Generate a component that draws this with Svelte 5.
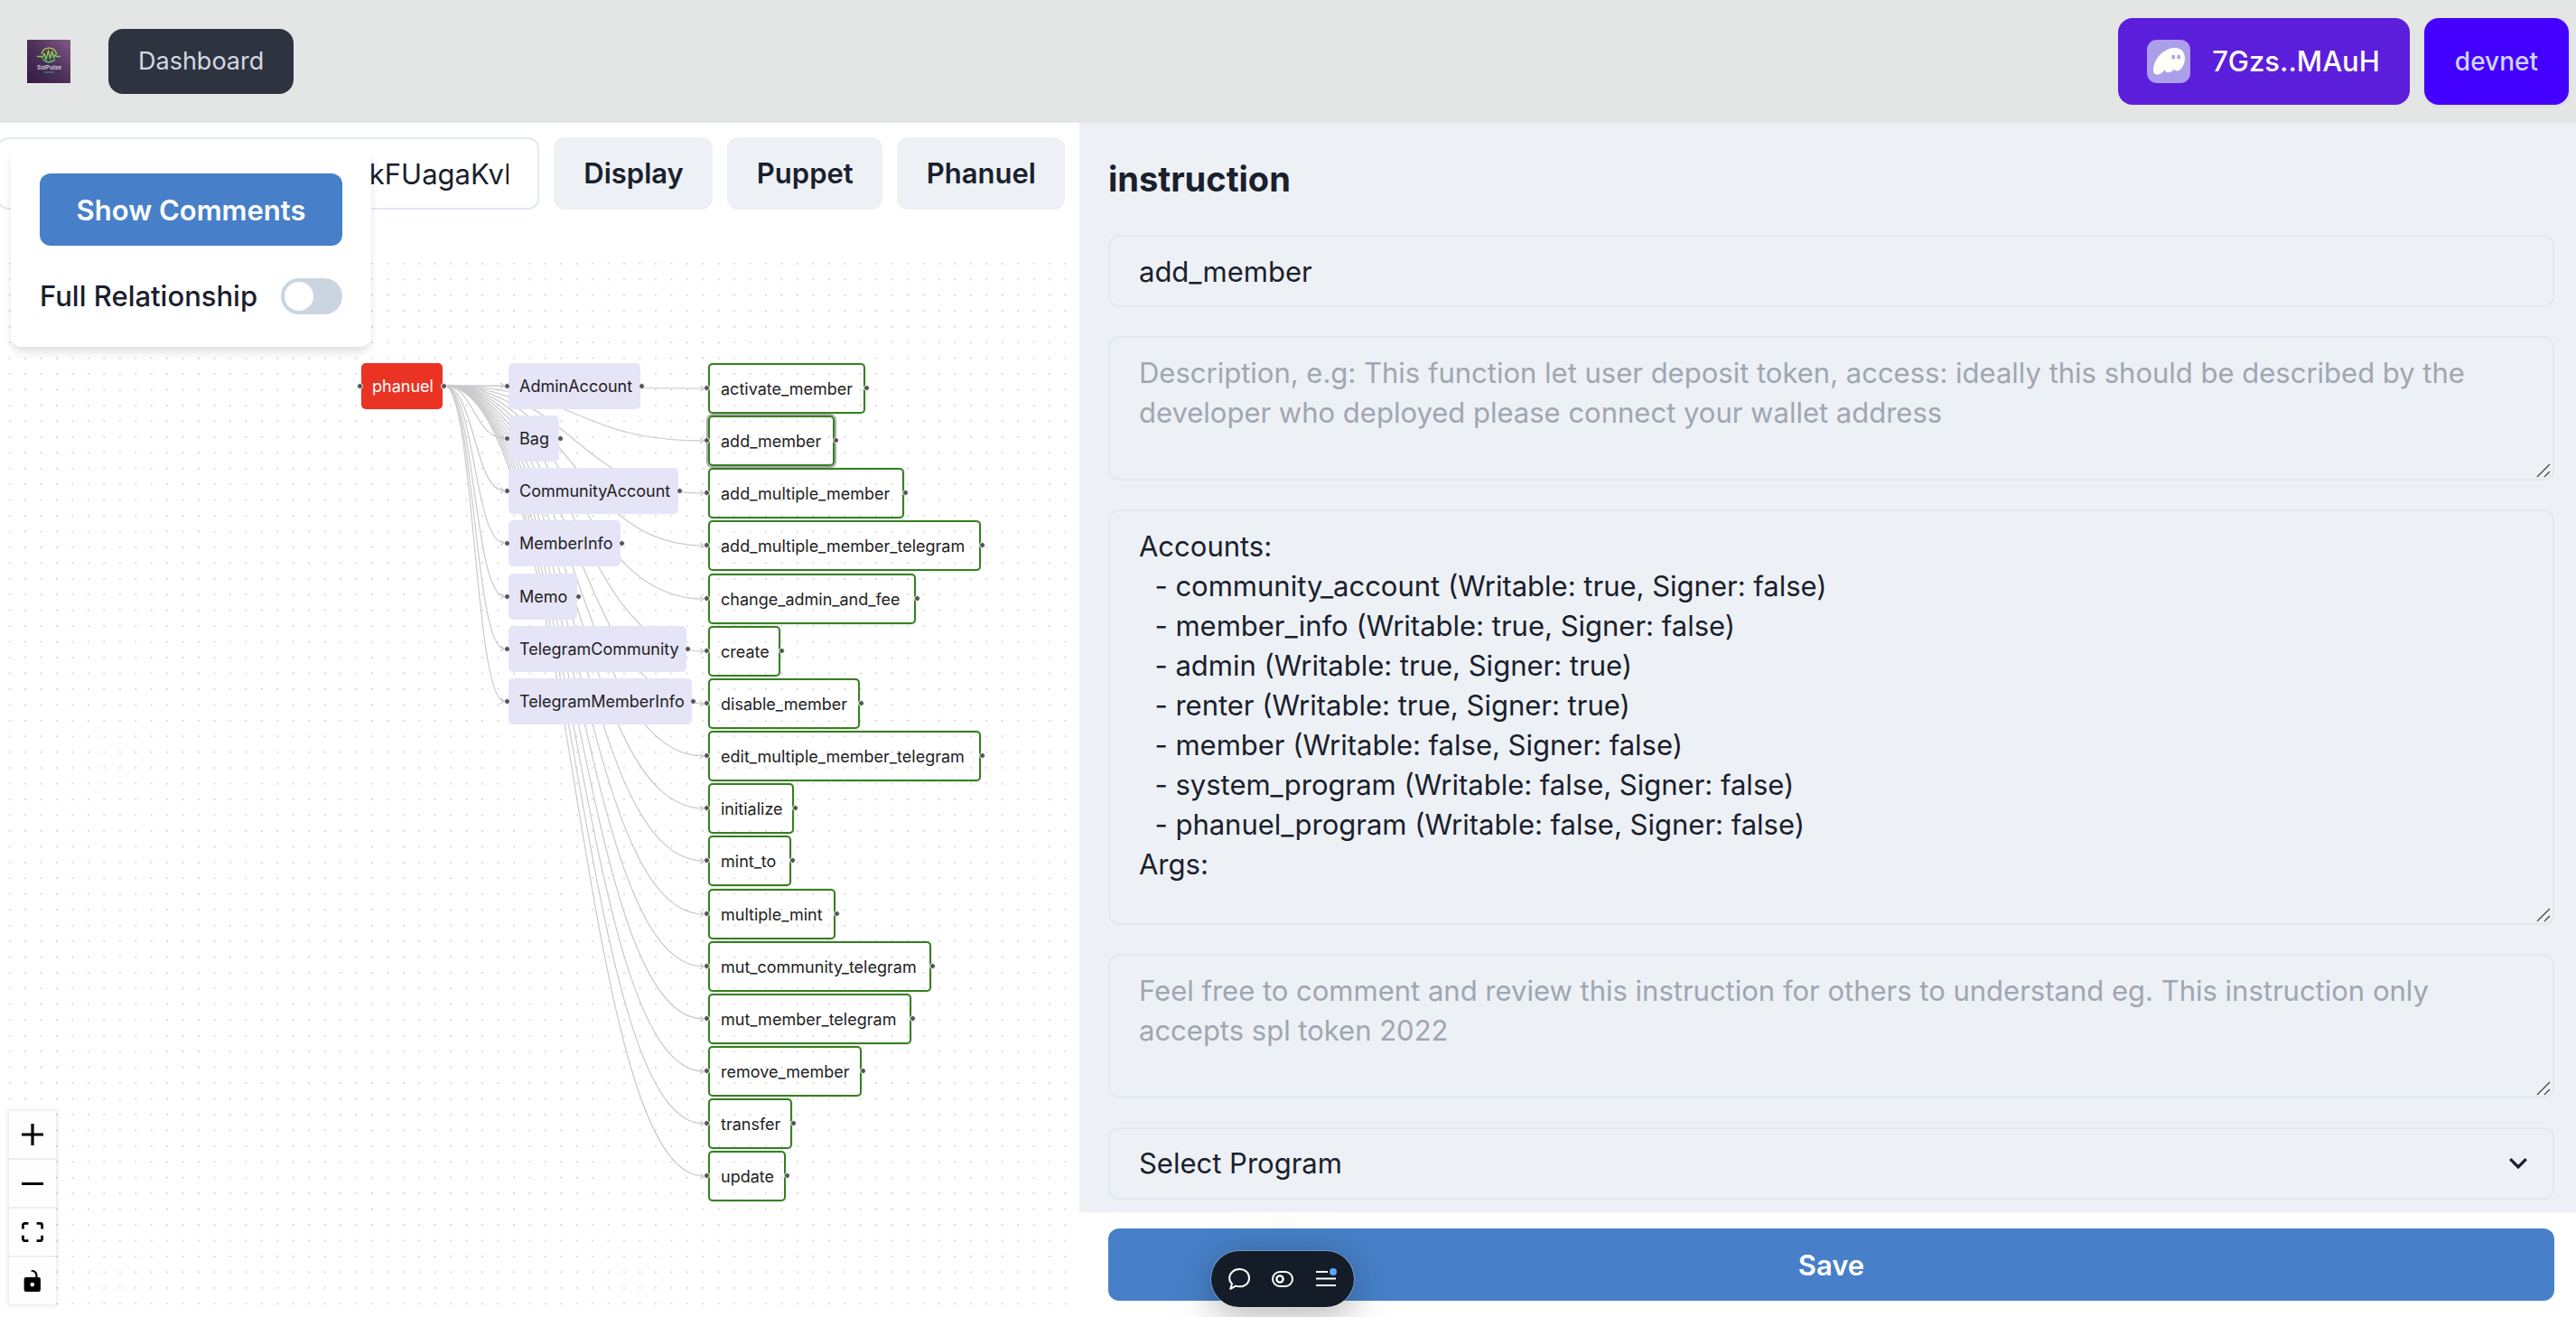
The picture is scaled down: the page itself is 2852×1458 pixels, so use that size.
<script>
  // Screen pixels per graph unit at the current zoom level.
  const SCALE = 1.163;
  const ROW_STEP = 50 * SCALE;
  const GRID = 15 * SCALE;
  const FIRST_ROW = 122;

  const rowTop = (index) => FIRST_ROW + Math.round(index * ROW_STEP);

  const accounts = [
    ['AdminAccount', 146],
    ['Bag', 56],
    ['CommunityAccount', 188],
    ['MemberInfo', 124],
    ['Memo', 76],
    ['TelegramCommunity', 197],
    ['TelegramMemberInfo', 203],
  ];

  const instructions = [
    ['activate_member', 174],
    ['add_member', 140],
    ['add_multiple_member', 217],
    ['add_multiple_member_telegram', 302],
    ['change_admin_and_fee', 230],
    ['create', 80],
    ['disable_member', 168],
    ['edit_multiple_member_telegram', 302],
    ['initialize', 95],
    ['mint_to', 92],
    ['multiple_mint', 141],
    ['mut_community_telegram', 247],
    ['mut_member_telegram', 225],
    ['remove_member', 170],
    ['transfer', 93],
    ['update', 86],
  ];

  const root = { name: 'phanuel', kind: 'program', x: 400, y: rowTop(0), w: 90 };
  const nodes = [
    root,
    ...accounts.map(([name, w], i) => ({ name, kind: 'account', x: 563, y: rowTop(i), w })),
    ...instructions.map(([name, w], i) => ({ name, kind: 'instruction', x: 784, y: rowTop(i), w })),
  ];

  const sourceX = 492;
  const sourceY = root.y + 25;

  const edges = nodes.slice(1).map((node) => {
    const tx = node.x - 5;
    const ty = node.y + (node.kind === 'instruction' ? 28 : 25);
    const mid = (sourceX + tx) / 2;
    return {
      curve: `M${sourceX} ${sourceY} C${mid} ${sourceY} ${mid} ${ty} ${tx} ${ty}`,
      arrow: `M${tx - 4} ${ty - 3} L${tx} ${ty} L${tx - 4} ${ty + 3}`,
    };
  });

  let selected = $state('add_member');
  let programId = $state('PhnGkv7Qm2WcR9sTdX4kFUagaKvkN3eHyTz');
  let fullRelationship = $state(false);
  let instructionName = $state('add_member');
  let description = $state('');
  let comment = $state('');
  let details = $state(
    [
      'Accounts:',
      '  - community_account (Writable: true, Signer: false)',
      '  - member_info (Writable: true, Signer: false)',
      '  - admin (Writable: true, Signer: true)',
      '  - renter (Writable: true, Signer: true)',
      '  - member (Writable: false, Signer: false)',
      '  - system_program (Writable: false, Signer: false)',
      '  - phanuel_program (Writable: false, Signer: false)',
      'Args:',
    ].join('\n')
  );
</script>

{#snippet grip()}
  <svg class="grip" viewBox="0 0 16 16" aria-hidden="true">
    <path d="M2 15.5 15.5 2M10 15.5 15.5 10" stroke="#fff" stroke-width="2" />
    <path d="M1 15 15 1M9 15 15 9" stroke="#55585e" stroke-width="1.6" />
  </svg>
{/snippet}

<div class="page">
  <header>
    <svg class="logo" viewBox="0 0 48 48" role="img" aria-label="SolPulse">
      <defs>
        <linearGradient id="logo-bg" x1="0" y1="1" x2="1" y2="0">
          <stop offset="0" stop-color="#321b45" />
          <stop offset="0.5" stop-color="#4d3059" />
          <stop offset="1" stop-color="#82598a" />
        </linearGradient>
        <linearGradient id="logo-mark" x1="0" y1="8" x2="0" y2="26" gradientUnits="userSpaceOnUse">
          <stop offset="0" stop-color="#c3d63c" />
          <stop offset="1" stop-color="#43cf62" />
        </linearGradient>
      </defs>
      <rect width="48" height="48" fill="url(#logo-bg)" />
      <g fill="none" stroke="url(#logo-mark)" stroke-linecap="round" stroke-linejoin="round">
        <path d="M16 15.500a8.600 8.600 0 0 1 16.600 0M18 22a8.600 8.600 0 0 0 12.500 0" stroke-width="1.400" />
        <path d="M11.500 18.500h4l1.500 1.500 2-5 2 7 2.500-10 2 9 2.200-8 2 7 1.500-3.500 1.300 2h4" stroke-width="1.300" />
      </g>
      <text x="24.500" y="32.500" text-anchor="middle" font-size="6.500" font-weight="600" fill="#d8cfe0">SolPulse</text>
      <path d="M19 36h11" stroke="#3c8f86" stroke-width="1.400" stroke-dasharray="2 0.600" />
    </svg>
    <a class="nav-link" href="#dashboard">Dashboard</a>
    <div class="wallet">
      <button class="address" type="button">
        <svg viewBox="0 0 48 48" aria-hidden="true">
          <rect width="48" height="48" rx="11" fill="#ab9fec" />
          <path d="M7 34C7 22 18 9 31 9c7.500 0 11 5 11 11.500C42 28 37.500 34.500 33.500 34.500c-2 0-3-.700-3.200-2.200-2 2.500-4.500 4-6.800 4-2.200 0-3.500-1.300-3.400-3.300C17.500 36.500 14.500 38.500 11.500 38.500 8.500 38.500 7 36.800 7 34z" fill="#fffdf8" />
          <ellipse cx="29.200" cy="19" rx="1.900" ry="2.500" fill="#ab9fec" />
          <ellipse cx="35.200" cy="19" rx="1.900" ry="2.500" fill="#ab9fec" />
        </svg>
        7Gzs..MAuH
      </button>
      <button class="network" type="button">devnet</button>
    </div>
  </header>

  <main>
    <section class="explorer" aria-label="Program graph">
      <div class="toolbar">
        <input type="text" aria-label="Program address" bind:value={programId} />
        <button type="button">Display</button>
        <button type="button">Puppet</button>
        <button type="button">Phanuel</button>
      </div>

      <div class="canvas">
        <svg class="edges" width="100%" height="100%" aria-hidden="true">
          <defs>
            <pattern id="grid" x="2" y="3.200" width={GRID} height={GRID} patternUnits="userSpaceOnUse">
              <circle cx="8.700" cy="8.700" r="0.600" fill="#81818a" />
            </pattern>
          </defs>
          <rect width="100%" height="100%" fill="url(#grid)" />
          {#each edges as edge}
            <path d={edge.curve} />
            <path d={edge.arrow} />
          {/each}
        </svg>

        {#each nodes as node}
          <button
            type="button"
            class="node {node.kind}"
            class:selected={selected === node.name}
            style="left: {node.x}px; top: {node.y}px; width: {node.w}px"
            onclick={() => (selected = node.name)}
          >{node.name}</button>
        {/each}

        <div class="controls">
          <button type="button" aria-label="Zoom in">
            <svg viewBox="0 0 32 32"><path d="M32 18.133H18.133V32h-4.266V18.133H0v-4.266h13.867V0h4.266v13.867H32z" /></svg>
          </button>
          <button type="button" aria-label="Zoom out">
            <svg viewBox="0 0 32 4"><path d="M0 0h32v4H0z" /></svg>
          </button>
          <button type="button" aria-label="Fit view">
            <svg viewBox="0 0 32 30"><path d="M3.692 4.630c0-.530.400-.938.939-.938h5.215V0H4.708C2.130 0 0 2.054 0 4.630v5.216h3.692V4.631zM27.354 0h-5.200v3.692h5.170c.530 0 .984.400.984.939v5.215H32V4.631A4.624 4.624 0 0 0 27.354 0zm.954 24.830c0 .532-.400.940-.939.940h-5.215v3.768h5.215c2.577 0 4.631-2.130 4.631-4.707v-5.139h-3.692v5.139zm-23.677.940a.919.919 0 0 1-.939-.940v-5.138H0v5.139c0 2.577 2.130 4.707 4.708 4.707h5.138V25.770H4.631z" /></svg>
          </button>
          <button type="button" aria-label="Toggle interactivity">
            <svg viewBox="0 0 25 32"><path d="M21.333 10.667H19.810V7.619C19.810 3.429 16.380 0 12.190 0c-4.114 1.828-1.370 2.133.305 2.438 1.676.305 4.420 2.590 4.420 5.181v3.048H3.047A3.056 3.056 0 0 0 0 13.714v15.238A3.056 3.056 0 0 0 3.048 32h18.285a3.056 3.056 0 0 0 3.048-3.048V13.714a3.056 3.056 0 0 0-3.048-3.047zM12.190 24.533a3.056 3.056 0 0 1-3.047-3.047 3.056 3.056 0 0 1 3.047-3.048 3.056 3.056 0 0 1 3.048 3.048 3.056 3.056 0 0 1-3.048 3.047z" /></svg>
          </button>
        </div>
      </div>

      <div class="options">
        <button type="button" class="primary">Show Comments</button>
        <label>
          Full Relationship
          <input type="checkbox" role="switch" bind:checked={fullRelationship} />
        </label>
      </div>
    </section>

    <form class="panel" onsubmit={(event) => event.preventDefault()}>
      <div class="fields">
        <h2>instruction</h2>
        <input type="text" class="field" aria-label="Instruction name" bind:value={instructionName} />
        <div class="area">
          <textarea
            class="field"
            aria-label="Description"
            bind:value={description}
            placeholder="Description, e.g: This function let user deposit token, access: ideally this should be described by the developer who deployed please connect your wallet address"
          ></textarea>
          {@render grip()}
        </div>
        <div class="area">
          <textarea class="field tall" aria-label="Accounts and arguments" bind:value={details}></textarea>
          {@render grip()}
        </div>
        <div class="area">
          <textarea
            class="field"
            aria-label="Comment"
            bind:value={comment}
            placeholder="Feel free to comment and review this instruction for others to understand eg. This instruction only accepts spl token 2022"
          ></textarea>
          {@render grip()}
        </div>
        <div class="area">
          <select class="field" aria-label="Program">
            <option>Select Program</option>
          </select>
          <svg class="chevron" viewBox="0 0 20 12" aria-hidden="true">
            <path d="M1.200 1.200 10 10 18.800 1.200" fill="none" stroke="#1a202c" stroke-width="3.200" />
          </svg>
        </div>
      </div>
      <div class="actions">
        <button type="submit" class="primary">Save</button>
      </div>
    </form>
  </main>

  <div class="dock">
    <button type="button" aria-label="Comments">
      <svg viewBox="0 0 24 24">
        <path d="M2.300 22.800 4 17.200C2 15.500 1.200 13.300 1.200 11 1.200 5.300 6 1.100 12.200 1.100S23 5 23 10.800 18.600 20.200 13 20.200C11.300 20.200 9.500 20 8 19.600z" fill="none" stroke="#fff" stroke-width="2" stroke-linejoin="round" />
      </svg>
    </button>
    <button type="button" aria-label="Feature flags">
      <svg viewBox="0 0 24 24" fill="none" stroke="#fff" stroke-width="2">
        <rect x="1" y="4" width="22" height="16" rx="8" />
        <circle cx="9" cy="12" r="3.600" stroke-width="2.400" />
      </svg>
    </button>
    <button type="button" aria-label="Menu">
      <svg viewBox="0 0 24 24">
        <path d="M1 4h13M1 11.500h22M1 19h22" stroke="#fff" stroke-width="2.200" />
        <circle cx="20" cy="4" r="4" fill="#60a5fa" />
      </svg>
    </button>
  </div>
</div>

<style>
  :global(body) {
    background: #fff;
  }

  .page {
    display: flex;
    flex-direction: column;
    min-height: 100vh;
    overflow: hidden;
    color: #1a202c;
    font-family: Inter, 'Liberation Sans', sans-serif;
    font-size: 31px;
    line-height: 44px;
  }

  .page :is(button, input, textarea, select) {
    box-sizing: border-box;
    margin: 0;
    border: 0;
    font: inherit;
    color: inherit;
  }

  svg {
    display: block;
  }

  header {
    display: flex;
    align-items: center;
    gap: 42px;
    box-sizing: border-box;
    height: 136px;
    padding: 0 8px 0 30px;
    background: #e4e6e5;
  }

  .logo {
    width: 48px;
    height: 48px;
  }

  .nav-link {
    padding: 14px 33px;
    border-radius: 16px;
    background: #2d333f;
    color: #d4d8e2;
    font-size: 27px;
    text-decoration: none;
  }

  .wallet {
    display: flex;
    gap: 16px;
    margin-left: auto;
  }

  .wallet button {
    height: 96px;
    border-radius: 16px;
  }

  .page .address {
    display: flex;
    align-items: center;
    gap: 24px;
    padding: 0 33px 0 32px;
    background: #5b1edb;
    color: #fff;
    font-weight: 500;
  }

  .address svg {
    width: 48px;
    height: 48px;
  }

  .page .network {
    padding: 0 34px;
    background: #4400ff;
    box-shadow: 0 2px 4px rgb(0 0 0 / 5%);
    color: #cfd6ff;
    font-size: 28px;
    font-weight: 500;
  }

  main {
    display: grid;
    grid-template-columns: 419fr 581fr;
    flex: 1;
  }

  .explorer {
    position: relative;
    display: flex;
    flex-direction: column;
    min-width: 0;
  }

  .toolbar {
    display: flex;
    gap: 16px;
    padding: 16px 16px 48px 0;
  }

  .toolbar input {
    flex: 1;
    min-width: 0;
    height: 80px;
    margin-left: -3px;
    padding: 0 32px;
    border: 2px solid #e2e8f0;
    border-radius: 12px;
    background: #fff;
  }

  .toolbar button {
    height: 80px;
    padding: 0 32px 0 33px;
    border-radius: 12px;
    background: #edf1f6;
    font-weight: 600;
  }

  .canvas {
    position: relative;
    flex: 1;
  }

  .edges {
    position: absolute;
    inset: 0;
  }

  .edges path {
    fill: none;
    stroke: #c9c9cb;
    stroke-width: 1.200;
  }

  .page .node {
    position: absolute;
    height: 51px;
    padding: 0 0 0 12px;
    border-radius: 5px;
    background: #e6e4f7;
    color: #222;
    font-size: 18px;
    line-height: 24px;
    text-align: left;
    white-space: nowrap;
  }

  .page .program {
    background: #ea3323;
    color: #fff;
  }

  .page .instruction {
    height: 56px;
    padding-top: 2px;
    border: 2px solid #367f22;
    background: none;
    box-shadow: 0 0 1px #367f22;
  }

  .page .instruction.selected {
    box-shadow: 0 0 1px 2px #a8a8a8;
  }

  .node::before,
  .node::after {
    content: '';
    position: absolute;
    top: 50%;
    width: 5px;
    height: 5px;
    margin-top: -4px;
    border: 1px solid #fff;
    border-radius: 50%;
    background: #555;
  }

  .node::before {
    left: -5px;
  }

  .node::after {
    right: -5px;
  }

  .instruction::before {
    left: -7px;
  }

  .instruction::after {
    right: -7px;
  }

  .controls {
    position: absolute;
    left: 10px;
    bottom: 14px;
    display: grid;
    gap: 2px;
    background: #eee;
    box-shadow: 0 0 4px 2px rgb(0 0 0 / 8%);
  }

  .controls button {
    display: grid;
    place-items: center;
    width: 52px;
    height: 52px;
    padding: 0;
    background: #fefefe;
  }

  .controls svg {
    width: 24px;
    max-height: 24px;
  }

  .options {
    position: absolute;
    top: 24px;
    left: 12px;
    display: grid;
    gap: 34px;
    padding: 32px 32px 34px;
    border-radius: 12px;
    background: #fff;
    box-shadow: 0 8px 12px -2px rgb(0 0 0 / 10%), 0 4px 8px -2px rgb(0 0 0 / 6%);
  }

  .page .primary {
    height: 80px;
    padding: 2px 32px 0;
    border-radius: 12px;
    background: #4780c8;
    color: #fff;
    font-weight: 600;
  }

  .options label {
    display: flex;
    align-items: center;
    gap: 26px;
    font-weight: 500;
  }

  .options input {
    flex: none;
    width: 68px;
    height: 40px;
    padding: 4px;
    border-radius: 20px;
    background: #cbd5e0;
    appearance: none;
  }

  .options input::before {
    content: '';
    display: block;
    width: 32px;
    height: 32px;
    border-radius: 50%;
    background: #fff;
  }

  .options input:checked {
    padding-left: 32px;
    background: #4780c8;
  }

  .panel {
    display: flex;
    flex-direction: column;
    min-width: 0;
  }

  .fields {
    display: flex;
    flex: 1;
    flex-direction: column;
    gap: 32px;
    padding: 32px 24px 14px 32px;
    background: #edf1f6;
  }

  h2 {
    margin: 0;
    font-size: 38px;
    font-weight: 700;
    line-height: 60px;
  }

  .area {
    position: relative;
  }

  .page .field {
    display: block;
    width: 100%;
    height: 80px;
    padding: 0 32px;
    border: 2px solid #e3e8ed;
    border-radius: 12px;
    background: transparent;
  }

  .page textarea.field {
    height: 160px;
    padding: 17px 32px 16px;
    overflow: hidden;
    resize: none;
  }

  .page textarea.tall {
    height: 460px;
  }

  .field::placeholder {
    color: #a0a6b1;
    opacity: 1;
  }

  select {
    appearance: none;
  }

  .grip {
    position: absolute;
    right: 4px;
    bottom: 3px;
    width: 16px;
    height: 16px;
  }

  .chevron {
    position: absolute;
    top: 34px;
    right: 30px;
    width: 20px;
    height: 12px;
  }

  .actions {
    display: grid;
    padding: 18px 24px 18px 32px;
  }

  .dock {
    position: fixed;
    bottom: 10px;
    left: 47%;
    display: flex;
    padding: 7px;
    border: 1px solid rgb(255 255 255 / 25%);
    border-radius: 32px;
    background: #131c27;
    background-clip: padding-box;
    box-shadow: 0 8px 40px rgb(0 0 0 / 25%), 0 16px 80px rgb(0 0 0 / 8%);
  }

  .dock button {
    display: grid;
    place-items: center;
    width: 48px;
    height: 48px;
    padding: 0;
    background: none;
  }

  .dock svg {
    width: 24px;
    height: 24px;
  }
</style>
